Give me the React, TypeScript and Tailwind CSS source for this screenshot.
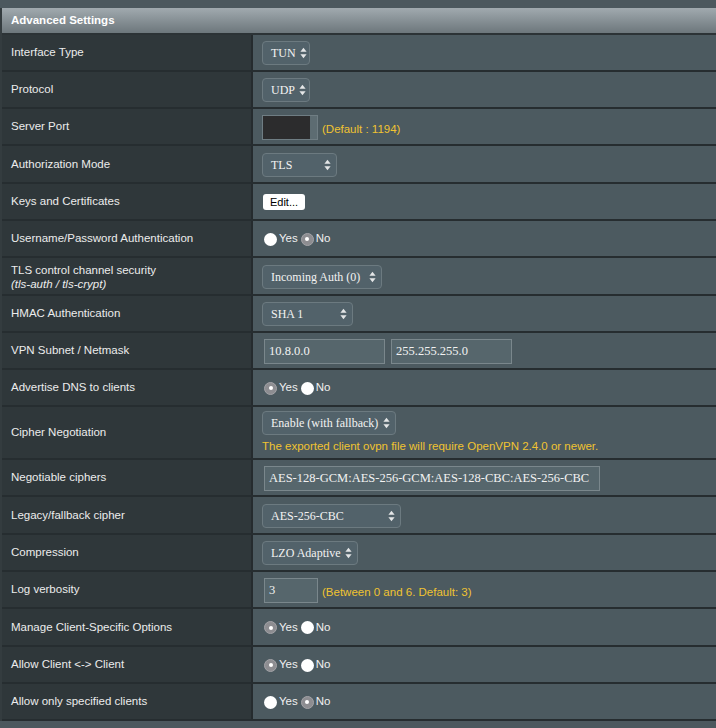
import React from "react";

const SANS = { fontFamily: '"Liberation Sans", Arial, Helvetica, sans-serif' };
const SERIF = { fontFamily: '"Liberation Serif", "Times New Roman", serif' };

function Arrows() {
  return (
    <svg width="7" height="12" viewBox="0 0 7 12" className="shrink-0">
      <polygon points="3.5,0.8 6.6,4.8 0.4,4.8" fill="#e4e6e7" />
      <polygon points="0.4,7.2 6.6,7.2 3.5,11.2" fill="#e4e6e7" />
    </svg>
  );
}

function Select({ text, w }: { text: string; w: string }) {
  return (
    <div
      className={`${w} h-[24px] flex items-center justify-between gap-[4px] pl-[8px] pr-[5px] rounded-[4px] border border-[#6c7a80] bg-[#52626a] text-[12px] text-[#f2f2f2]`}
      style={SERIF}
    >
      <span className="whitespace-nowrap">{text}</span>
      <Arrows />
    </div>
  );
}

function TextInput({ value, w }: { value: string; w: string }) {
  return (
    <div
      className={`${w} h-[25px] ml-[2px] flex items-center pl-[4px] border border-[#7a878c] bg-[#56666c] text-[12.5px] text-[#f2f2f2] whitespace-nowrap`}
      style={SERIF}
    >
      {value}
    </div>
  );
}

function Radio({ checked }: { checked: boolean }) {
  return checked ? (
    <span className="w-[13px] h-[13px] rounded-full bg-[#8d8d91] border border-[#a3a3a7] flex items-center justify-center">
      <span className="w-[4px] h-[4px] rounded-full bg-white" />
    </span>
  ) : (
    <span className="w-[13px] h-[13px] rounded-full bg-white" />
  );
}

function YesNo({ yes }: { yes: boolean }) {
  return (
    <div className="flex items-center ml-[2px] text-[11.5px] text-[#f0f0f0]" style={SANS}>
      <Radio checked={yes} />
      <span className="ml-[2px] mr-[3px]">Yes</span>
      <Radio checked={!yes} />
      <span className="ml-[2px]">No</span>
    </div>
  );
}

function Hint({ children }: { children: React.ReactNode }) {
  return (
    <span className="text-[11.5px] text-[#f0c331] whitespace-nowrap" style={SANS}>
      {children}
    </span>
  );
}

function Row({
  label,
  h,
  children,
}: {
  label: React.ReactNode;
  h: string;
  children: React.ReactNode;
}) {
  return (
    <div className={`flex ${h} border-b-2 border-[#262d30]`}>
      <div
        className="w-[251px] shrink-0 bg-[#2f373a] border-r-2 border-[#252b2e] flex items-center pl-[9px] pt-[1px] text-[11.5px] text-[#ececec]"
        style={SANS}
      >
        {label}
      </div>
      <div className="flex-1 bg-[#4c5a60] pl-[9px] pt-[1px] flex items-center">{children}</div>
    </div>
  );
}

export default function App() {
  return (
    <div className="w-[716px] h-[728px] bg-[#4c585e] pt-[8px] overflow-hidden">
      <div className="border-l-2 border-[#343c3f]">
        <div
          className="h-[27px] flex items-center pl-[9px] pt-[1px] bg-gradient-to-b from-[#a1aaaf] to-[#6d777c] border-b-2 border-[#2c3336] text-white font-bold text-[11.5px]"
          style={SANS}
        >
          Advanced Settings
        </div>

        <Row label="Interface Type" h="h-[37px]">
          <Select text="TUN" w="w-[48px]" />
        </Row>
        <Row label="Protocol" h="h-[37px]">
          <Select text="UDP" w="w-[48px]" />
        </Row>
        <Row label="Server Port" h="h-[37px]">
          <div className="flex items-center">
            <div className="w-[56px] h-[25px] border border-[#6f7d83] flex">
              <div className="w-[47px] h-full bg-[#2c2c2d]" />
              <div className="flex-1 h-full bg-[#5d6c72]" />
            </div>
            <span className="ml-[4px]">
              <Hint>(Default : 1194)</Hint>
            </span>
          </div>
        </Row>
        <Row label="Authorization Mode" h="h-[38px]">
          <Select text="TLS" w="w-[75px]" />
        </Row>
        <Row label="Keys and Certificates" h="h-[37px]">
          <div
            className="ml-[1px] w-[42px] h-[16px] bg-white rounded-[3px] flex items-center justify-center text-[11px] text-black"
            style={SANS}
          >
            Edit...
          </div>
        </Row>
        <Row label="Username/Password Authentication" h="h-[37px]">
          <YesNo yes={false} />
        </Row>
        <Row
          label={
            <div className="leading-[14px]">
              <div>TLS control channel security</div>
              <div className="italic">(tls-auth / tls-crypt)</div>
            </div>
          }
          h="h-[38px]"
        >
          <Select text="Incoming Auth (0)" w="w-[120px]" />
        </Row>
        <Row label="HMAC Authentication" h="h-[37px]">
          <Select text="SHA 1" w="w-[91px]" />
        </Row>
        <Row label="VPN Subnet / Netmask" h="h-[37px]">
          <div className="flex items-center gap-[4px]">
            <TextInput value="10.8.0.0" w="w-[121px]" />
            <TextInput value="255.255.255.0" w="w-[121px]" />
          </div>
        </Row>
        <Row label="Advertise DNS to clients" h="h-[37px]">
          <YesNo yes={true} />
        </Row>
        <Row label="Cipher Negotiation" h="h-[53px]">
          <div className="flex flex-col items-start gap-[3px] pt-[1px]">
            <Select text="Enable (with fallback)" w="w-[134px]" />
            <Hint>The exported client ovpn file will require OpenVPN 2.4.0 or newer.</Hint>
          </div>
        </Row>
        <Row label="Negotiable ciphers" h="h-[37px]">
          <TextInput value="AES-128-GCM:AES-256-GCM:AES-128-CBC:AES-256-CBC" w="w-[336px]" />
        </Row>
        <Row label="Legacy/fallback cipher" h="h-[38px]">
          <Select text="AES-256-CBC" w="w-[139px]" />
        </Row>
        <Row label="Compression" h="h-[37px]">
          <Select text="LZO Adaptive" w="w-[96px]" />
        </Row>
        <Row label="Log verbosity" h="h-[37px]">
          <div className="flex items-center">
            <TextInput value="3" w="w-[54px]" />
            <span className="ml-[4px]">
              <Hint>(Between 0 and 6. Default: 3)</Hint>
            </span>
          </div>
        </Row>
        <Row label="Manage Client-Specific Options" h="h-[38px]">
          <YesNo yes={true} />
        </Row>
        <Row label="Allow Client <-> Client" h="h-[37px]">
          <YesNo yes={true} />
        </Row>
        <Row label="Allow only specified clients" h="h-[37px]">
          <YesNo yes={false} />
        </Row>
      </div>
    </div>
  );
}
